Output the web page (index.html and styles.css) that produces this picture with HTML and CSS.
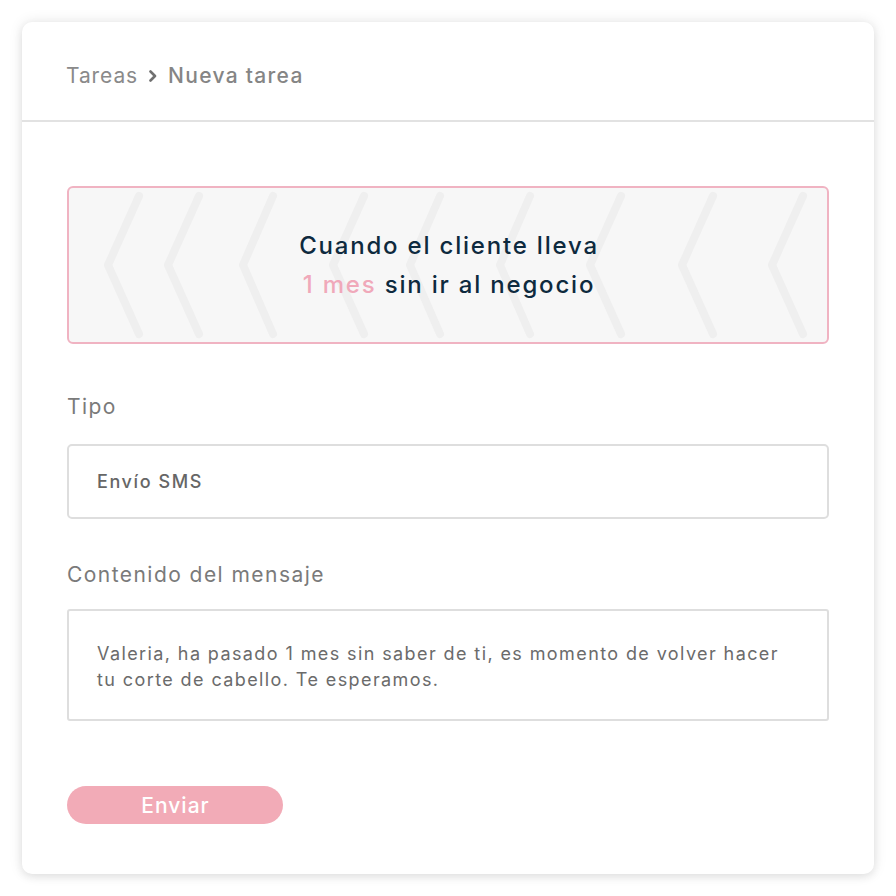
FILE: index.html
```html
<!DOCTYPE html>
<html lang="es">
<head>
<meta charset="utf-8">
<title>Nueva tarea</title>
<link rel="stylesheet" href="styles.css">
</head>
<body>
<div class="card">
  <div class="header">
    <span class="crumb">Tareas</span>
    <svg class="crumb-sep" width="10" height="12" viewBox="0 0 10 12"><polyline points="2.5,1.5 7,6 2.5,10.5" fill="none" stroke="#707070" stroke-width="2.6" stroke-linecap="round" stroke-linejoin="round"/></svg>
    <span class="crumb current">Nueva tarea</span>
  </div>
  <div class="body">
    <div class="hero">
      <svg class="hero-bg" width="758" height="154" viewBox="0 0 758 154">
        <g fill="none" stroke="#efefef" stroke-width="8" stroke-linecap="round" stroke-linejoin="round">
          <polyline points="70,8 39,77 70,146"/>
          <polyline points="130,8 99,77 130,146"/>
          <polyline points="204,8 174,77 204,146"/>
          <polyline points="295,8 264,77 295,146"/>
          <polyline points="371,8 341,77 371,146"/>
          <polyline points="461,8 431,77 461,146"/>
          <polyline points="552,8 521,77 552,146"/>
          <polyline points="644,8 613,77 644,146"/>
          <polyline points="734,8 703,77 734,146"/>
        </g>
      </svg>
      <p class="hero-text">Cuando el cliente lleva<br><span class="accent">1 mes</span> sin ir al negocio</p>
    </div>
    <div class="label label-first">Tipo</div>
    <div class="select">Envío SMS</div>
    <div class="label label-second">Contenido del mensaje</div>
    <div class="textarea">Valeria, ha pasado 1 mes sin saber de ti, es momento de volver hacer<br>tu corte de cabello. Te esperamos.</div>
    <button class="btn">Enviar</button>
  </div>
</div>
</body>
</html>
```
FILE: styles.css
```css
* { box-sizing: border-box; }
html, body { margin: 0; padding: 0; background: #ffffff; }
body {
  font-family: "Inter", "Open Sans", sans-serif;
  width: 896px;
  height: 896px;
  overflow: hidden;
}
.card {
  margin: 22px;
  width: 852px;
  height: 852px;
  background: #ffffff;
  border-radius: 10px;
  box-shadow: 0 0 14px rgba(0,0,0,0.10), 0 3px 8px rgba(0,0,0,0.07);
}
.header {
  height: 100px;
  padding: 9px 0 0 44px;
  display: flex;
  align-items: center;
  gap: 10px;
  border-bottom: 2px solid #e2e2e2;
}
.crumb {
  font-size: 21px;
  color: #8a8a8a;
  font-weight: 400;
  line-height: 24px;
  letter-spacing: 0.9px;
}
.crumb.current { font-weight: 500; color: #858585; letter-spacing: 1.3px; }
.crumb-sep { display: block; }
.body {
  padding: 64px 45px 0 45px;
}
.hero {
  position: relative;
  height: 158px;
  border: 2px solid #f0b3c2;
  border-radius: 6px;
  background: #f7f7f7;
  display: flex;
  align-items: center;
  justify-content: center;
  overflow: hidden;
}
.hero-bg {
  position: absolute;
  top: 0;
  left: 0;
}
.hero-text {
  position: relative;
  margin: 0;
  text-align: center;
  font-size: 24px;
  line-height: 39px;
  font-weight: 500;
  color: #0e2a3e;
  letter-spacing: 1.8px;
  padding-left: 2px;
}
.accent { color: #f0a9ba; }
.label {
  font-size: 21px;
  line-height: 24px;
  color: #7a7a7a;
  letter-spacing: 1.45px;
}
.label-first { margin-top: 51px; }
.label-second { margin-top: 44px; }
.select {
  margin-top: 25px;
  height: 75px;
  border: 2px solid #dedede;
  border-radius: 5px;
  padding-left: 28px;
  display: flex;
  align-items: center;
  font-size: 18px;
  font-weight: 500;
  color: #666666;
  letter-spacing: 1.6px;
}
.textarea {
  margin-top: 22px;
  height: 112px;
  border: 2px solid #dedede;
  border-radius: 3px;
  padding: 30px 20px 0 28px;
  font-size: 18px;
  line-height: 26px;
  color: #6b6b6b;
  white-space: nowrap;
  letter-spacing: 1.4px;
}
.btn {
  display: block;
  margin-top: 65px;
  width: 216px;
  height: 38px;
  border: none;
  border-radius: 19px;
  background: #f2abb7;
  color: #ffffff;
  font-family: inherit;
  font-size: 21px;
  font-weight: 500;
  padding: 0 0 0 1px;
  letter-spacing: 1px;
}
```
